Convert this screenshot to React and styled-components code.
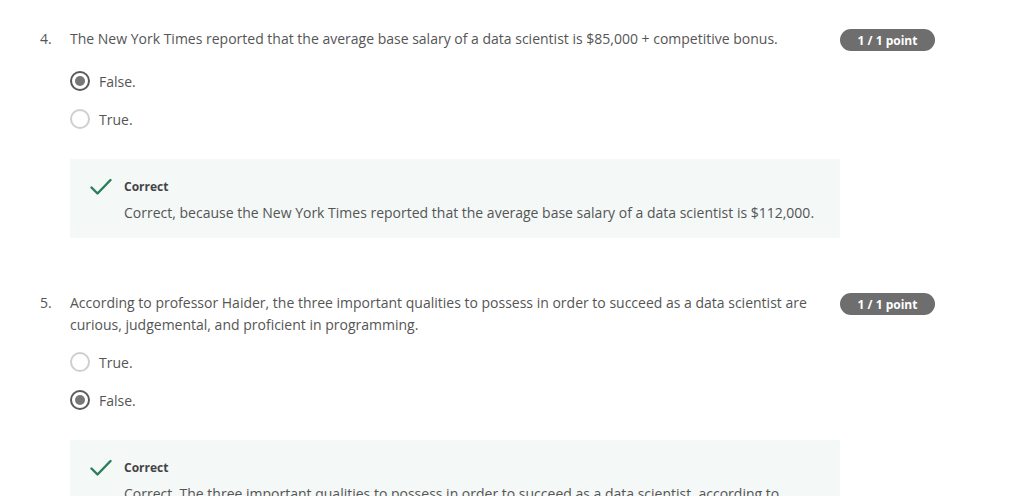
import React from "react";
import styled, { createGlobalStyle } from "styled-components";

const Global = createGlobalStyle`
  html, body { margin: 0; padding: 0; background: #fff; }
  body { font-family: "Open Sans", "Liberation Sans", sans-serif; color: #555; }
`;

const Page = styled.div`
  padding: 28px 0 0 40px;
  width: 895px;
`;

const Question = styled.section`
  margin-bottom: 54px;
`;

const Header = styled.div`
  display: flex;
  align-items: flex-start;
`;

const Num = styled.div`
  width: 30px;
  flex: none;
  font-size: 14px;
  line-height: 22px;
`;

const Prompt = styled.div`
  flex: 1;
  font-size: 14px;
  line-height: 22px;
  padding-right: 30px;
`;

const Badge = styled.div`
  flex: none;
  width: 95px;
  height: 22px;
  border-radius: 11px;
  background: #6e6e6e;
  color: #fff;
  font-size: 12px;
  font-weight: 700;
  display: flex;
  align-items: center;
  justify-content: center;
  margin: 1px 0 4px 0;
`;

const Options = styled.div`
  margin: 7px 0 21px 30px;
`;

const Option = styled.div`
  height: 38px;
  display: flex;
  align-items: center;
  gap: 9px;
  font-size: 14px;
  color: #555;
`;

const Radio = styled.span`
  width: 20px;
  height: 20px;
  box-sizing: border-box;
  border-radius: 50%;
  border: ${(p) => (p.$checked ? "2px solid #5a5a5a" : "2px solid #cfcfcf")};
  display: flex;
  align-items: center;
  justify-content: center;
  &::after {
    content: "";
    display: ${(p) => (p.$checked ? "block" : "none")};
    width: 10px;
    height: 10px;
    border-radius: 50%;
    background: #777;
  }
`;

const Feedback = styled.div`
  margin-left: 30px;
  width: 770px;
  box-sizing: border-box;
  background: #f4f8f7;
  padding: 19px 20px 14px 20px;
  display: flex;
  gap: 12px;
`;

const CheckIcon = styled.svg`
  flex: none;
  width: 22px;
  height: 18px;
`;

const FeedbackBody = styled.div`
  display: flex;
  flex-direction: column;
`;

const FeedbackTitle = styled.div`
  font-size: 12px;
  font-weight: 700;
  line-height: 18px;
  color: #444;
  margin-bottom: 6px;
`;

const FeedbackText = styled.div`
  font-size: 14px;
  line-height: 22px;
  color: #555;
`;

const Check = () => (
  <CheckIcon viewBox="0 0 22 18">
    <path d="M1.5 9.5 L7.5 15.5 L20.5 2" fill="none" stroke="#2a7d5b" strokeWidth="2.4" strokeLinecap="round" strokeLinejoin="round" />
  </CheckIcon>
);

const data = [
  {
    n: "4.",
    q: "The New York Times reported that the average base salary of a data scientist is $85,000 + competitive bonus.",
    opts: [
      { t: "False.", c: true },
      { t: "True.", c: false },
    ],
    fb: "Correct, because the New York Times reported that the average base salary of a data scientist is $112,000.",
  },
  {
    n: "5.",
    q: "According to professor Haider, the three important qualities to possess in order to succeed as a data scientist are curious, judgemental, and proficient in programming.",
    opts: [
      { t: "True.", c: false },
      { t: "False.", c: true },
    ],
    fb: "Correct. The three important qualities to possess in order to succeed as a data scientist, according to professor Haider, are curious, argumentative, and judgemental.",
  },
];

export default function App() {
  return (
    <>
      <Global />
      <Page>
        {data.map((d) => (
          <Question key={d.n}>
            <Header>
              <Num>{d.n}</Num>
              <Prompt>{d.q}</Prompt>
              <Badge>1 / 1 point</Badge>
            </Header>
            <Options>
              {d.opts.map((o) => (
                <Option key={o.t}>
                  <Radio $checked={o.c} />
                  {o.t}
                </Option>
              ))}
            </Options>
            <Feedback>
              <Check />
              <FeedbackBody>
                <FeedbackTitle>Correct</FeedbackTitle>
                <FeedbackText>{d.fb}</FeedbackText>
              </FeedbackBody>
            </Feedback>
          </Question>
        ))}
      </Page>
    </>
  );
}
